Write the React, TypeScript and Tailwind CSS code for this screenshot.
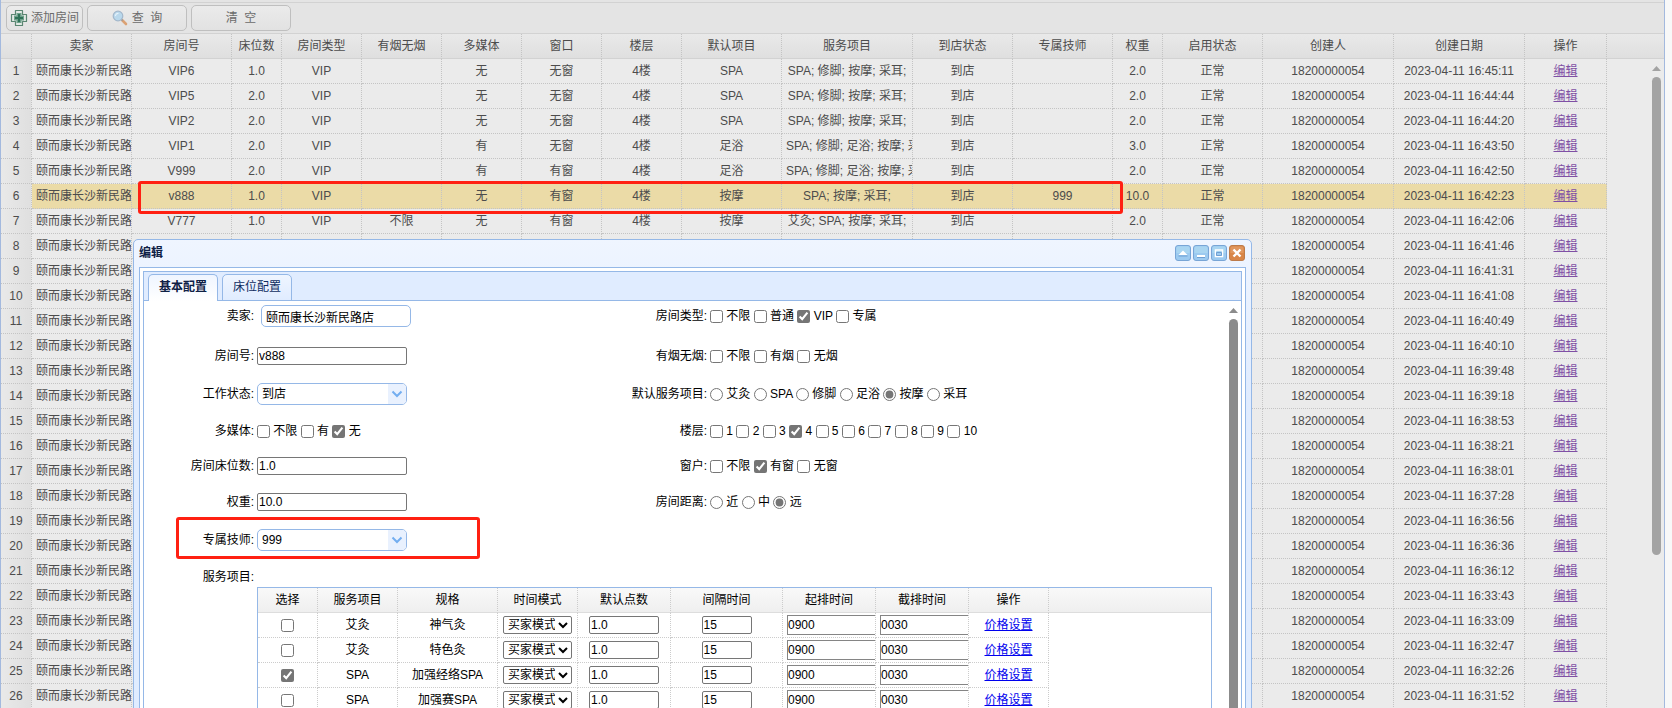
import { Fragment, ReactNode } from "react";

// [room, beds, type, smoking, media, window, floor, default item, items, status, technician, weight, enabled]
const rooms: string[][] = [
  ["VIP6", "1.0", "VIP", "", "无", "无窗", "4楼", "SPA", "SPA; 修脚; 按摩; 采耳;", "到店", "", "2.0", "正常"],
  ["VIP5", "2.0", "VIP", "", "无", "无窗", "4楼", "SPA", "SPA; 修脚; 按摩; 采耳;", "到店", "", "2.0", "正常"],
  ["VIP2", "2.0", "VIP", "", "无", "无窗", "4楼", "SPA", "SPA; 修脚; 按摩; 采耳;", "到店", "", "2.0", "正常"],
  ["VIP1", "2.0", "VIP", "", "有", "无窗", "4楼", "足浴", "SPA; 修脚; 足浴; 按摩; 采耳;", "到店", "", "3.0", "正常"],
  ["V999", "2.0", "VIP", "", "有", "有窗", "4楼", "足浴", "SPA; 修脚; 足浴; 按摩; 采耳;", "到店", "", "2.0", "正常"],
  ["v888", "1.0", "VIP", "", "无", "有窗", "4楼", "按摩", "SPA; 按摩; 采耳;", "到店", "999", "10.0", "正常"],
  ["V777", "1.0", "VIP", "不限", "无", "有窗", "4楼", "按摩", "艾灸; SPA; 按摩; 采耳;", "到店", "", "2.0", "正常"],
];

const times = [
  "16:45:11", "16:44:44", "16:44:20", "16:43:50", "16:42:50", "16:42:23", "16:42:06",
  "16:41:46", "16:41:31", "16:41:08", "16:40:49", "16:40:10", "16:39:48", "16:39:18",
  "16:38:53", "16:38:21", "16:38:01", "16:37:28", "16:36:56", "16:36:36", "16:36:12",
  "16:33:43", "16:33:09", "16:32:47", "16:32:26", "16:31:52",
];

const columns: [string, string][] = [
  ["", "w-[31px]"],
  ["卖家", "w-[100px]"],
  ["房间号", "w-[100px]"],
  ["床位数", "w-[50px]"],
  ["房间类型", "w-[80px]"],
  ["有烟无烟", "w-[80px]"],
  ["多媒体", "w-[80px]"],
  ["窗口", "w-[80px]"],
  ["楼层", "w-[80px]"],
  ["默认项目", "w-[100px]"],
  ["服务项目", "w-[131px]"],
  ["到店状态", "w-[100px]"],
  ["专属技师", "w-[100px]"],
  ["权重", "w-[50px]"],
  ["启用状态", "w-[100px]"],
  ["创建人", "w-[131px]"],
  ["创建日期", "w-[131px]"],
  ["操作", "w-[82px]"],
];

const serviceColumns: [string, string][] = [
  ["选择", "w-[60px]"],
  ["服务项目", "w-[80px]"],
  ["规格", "w-[100px]"],
  ["时间模式", "w-[80px]"],
  ["默认点数", "w-[93px]"],
  ["间隔时间", "w-[112px]"],
  ["起排时间", "w-[93px]"],
  ["截排时间", "w-[93px]"],
  ["操作", "w-[80px]"],
];

const services = [
  { item: "艾灸", spec: "神气灸", on: false },
  { item: "艾灸", spec: "特色灸", on: false },
  { item: "SPA", spec: "加强经络SPA", on: true },
  { item: "SPA", spec: "加强赛SPA", on: false },
];

const textBox = "h-[18px] rounded-[2px] border border-[#767676] bg-white px-px pb-px";

function AddIcon() {
  return (
    <svg width="18" height="18" viewBox="0 0 18 18" fill="none">
      <path d="M5.5 1.5h7v4h4v7h-4v4h-7v-4h-4v-7h4z" fill="#e3e9e5" stroke="#5b8672" strokeWidth="1.2" strokeLinejoin="round" />
      <path d="M6.500 4h5v2.500H14v5h-2.500V14h-5v-2.500H4v-5h2.500z" fill="#6da08a" />
      <path d="M8 5h2v3h3v2h-3v3H8v-3H5V8h3z" fill="#2f7257" />
    </svg>
  );
}

function SearchIcon() {
  return (
    <svg width="16" height="16" viewBox="0 0 16 16" fill="none">
      <path d="M10.500 10.500l3.500 3.500" stroke="#dba274" strokeWidth="2.600" strokeLinecap="round" />
      <path d="M9 9l1.600 1.600" stroke="#9a9a9a" strokeWidth="1.600" />
      <circle cx="6" cy="6" r="4.800" fill="#b9d8ec" stroke="#a3b7cb" strokeWidth="1.200" />
      <path d="M3.400 5.600c.3-1.400 1.300-2.200 2.600-2.300" stroke="#e6f2fa" strokeWidth="1.200" strokeLinecap="round" />
    </svg>
  );
}

function ToolButton({ className, children }: { className: string; children: ReactNode }) {
  return (
    <button
      type="button"
      className={`flex h-[26px] items-center justify-center rounded-[5px] border border-[#bfbfbf] bg-linear-to-b from-[#ebebeb] to-[#e2e2e2] text-[#6b6b6b] ${className}`}
    >
      {children}
    </button>
  );
}

function WindowTool({ name, children, close }: { name: string; children: ReactNode; close?: boolean }) {
  return (
    <button type="button" aria-label={name} className="size-4">
      <svg width="16" height="16" viewBox="0 0 16 16" fill="none">
        <rect x=".5" y=".5" width="15" height="15" rx="2.500" fill={close ? "#d98648" : "#9ccaf0"} stroke={close ? "#bd7b4a" : "#78a5d6"} />
        <path d="M1.500 8V3q0-1.500 1.500-1.500h10q1.500 0 1.500 1.500v5z" fill={close ? "#e0975f" : "#a9d5f1"} />
        {children}
      </svg>
    </button>
  );
}

function Scrollbar({ tone, thumb }: { tone: string; thumb: string }) {
  return (
    <div className={`flex w-[17px] flex-col items-center gap-[6px] pt-[6px] ${tone}`}>
      <svg width="9" height="5" viewBox="0 0 9 5" className="shrink-0">
        <path d="M4.500 0L9 5H0z" fill="currentColor" />
      </svg>
      <div className={`w-[9px] shrink-0 rounded-full bg-current ${thumb}`} />
    </div>
  );
}

function Options({ type, name, items, checked }: { type: "checkbox" | "radio"; name: string; items: string[]; checked?: string }) {
  return (
    <div role="group" aria-label={name} className="whitespace-nowrap">
      {items.map((item) => (
        <Fragment key={item}>
          <label>
            <input
              type={type}
              name={name}
              defaultChecked={item === checked}
              className="size-[13px] align-middle accent-[#757575]"
            />{" "}
            {item}
          </label>{" "}
        </Fragment>
      ))}
    </div>
  );
}

function Combo({ id, value }: { id: string; value: string }) {
  return (
    <div className="flex h-[22px] w-[150px] overflow-hidden rounded-[5px] border border-[#95b8e7] bg-white">
      <select id={id} defaultValue={value} className="min-w-0 flex-1 appearance-none px-1">
        <option>{value}</option>
      </select>
      <span className="flex w-[18px] items-center justify-center bg-[#e9f1fe]">
        <svg width="12" height="8" viewBox="0 0 12 8" fill="none">
          <path d="M1.500 1.500L6 6l4.500-4.500" stroke="#73aef0" strokeWidth="2" />
        </svg>
      </span>
    </div>
  );
}

function Label({ htmlFor, children }: { htmlFor?: string; children: ReactNode }) {
  return htmlFor ? (
    <label htmlFor={htmlFor} className="pr-[3px] text-right">{children}</label>
  ) : (
    <span className="pr-[3px] text-right">{children}</span>
  );
}

function RoomGrid() {
  const cell = "overflow-hidden border-r border-b border-dotted border-[#c4c4c4] p-0 text-center whitespace-nowrap";
  return (
    <table className="w-full table-fixed border-separate border-spacing-0">
      <thead>
        <tr className="h-[25px]">
          {columns.map(([title, width]) => (
            <th key={title} className={`${width} border-r border-b border-[#d2d2d2] border-r-[#c4c4c4] [border-right-style:dotted] bg-linear-to-b from-[#e9e9e9] to-[#dfdfdf] p-0 font-normal`}>
              {title}
            </th>
          ))}
          <th className="border-b border-[#d2d2d2] bg-linear-to-b from-[#e9e9e9] to-[#dfdfdf] p-0" />
        </tr>
      </thead>
      <tbody>
        {times.map((time, i) => {
          const active = i === 5;
          const room = rooms[i] ?? Array<string>(13).fill("");
          return (
            <tr key={time} className={active ? "h-[25px] bg-[#ebdba7]" : "h-[25px]"}>
              <td className={`${cell} bg-linear-to-r from-[#e9e9e9] to-[#dfdfdf]`}>{i + 1}</td>
              <td className={cell}>
                <div className="overflow-hidden pl-1 text-left">颐而康长沙新民路店</div>
              </td>
              {room.map((text, j) => (
                <td key={j} className={cell}>
                  <div className={j === 8 ? "overflow-hidden px-1" : ""}>{text}</div>
                </td>
              ))}
              <td className={cell}>18200000054</td>
              <td className={cell}>2023-04-11 {time}</td>
              <td className={cell}>
                <a href="#edit" className="text-[#7f50a5] underline">编辑</a>
              </td>
              <td className="bg-[#ebebeb] p-0" />
            </tr>
          );
        })}
      </tbody>
    </table>
  );
}

function ServiceGrid() {
  const cell = "overflow-hidden border-r border-b border-dotted border-[#ccc] p-0 text-center whitespace-nowrap";
  return (
    <div className="mr-[29px] ml-[113px] border border-[#95b8e7]">
      <table className="w-full table-fixed border-separate border-spacing-0">
        <thead>
          <tr className="h-[25px]">
            {serviceColumns.map(([title, width]) => (
              <th key={title} className={`${width} border-r border-b border-[#ddd] border-r-[#ccc] [border-right-style:dotted] bg-linear-to-b from-[#f9f9f9] to-[#efefef] p-0 font-normal`}>
                {title}
              </th>
            ))}
            <th className="border-b border-[#ddd] bg-linear-to-b from-[#f9f9f9] to-[#efefef] p-0" />
          </tr>
        </thead>
        <tbody>
          {services.map((s) => (
            <tr key={s.spec} className="h-[25px]">
              <td className={cell}>
                <input type="checkbox" aria-label={s.spec} defaultChecked={s.on} className="size-[13px] align-middle accent-[#757575]" />
              </td>
              <td className={cell}>{s.item}</td>
              <td className={cell}>{s.spec}</td>
              <td className={cell}>
                <select aria-label="时间模式" className="mx-auto block h-[18px] w-[69px] rounded-[2px] border border-[#767676] bg-white">
                  <option>买家模式</option>
                </select>
              </td>
              <td className={cell}>
                <input aria-label="默认点数" defaultValue="1.0" className={`${textBox} mx-auto block w-[70px]`} />
              </td>
              <td className={cell}>
                <input aria-label="间隔时间" defaultValue="15" className={`${textBox} mx-auto block w-[50px]`} />
              </td>
              <td className={cell}>
                <input aria-label="起排时间" defaultValue="0900" className="ml-1 block h-5 w-[100px] border border-[#858585] bg-white" />
              </td>
              <td className={cell}>
                <input aria-label="截排时间" defaultValue="0030" className="ml-1 block h-5 w-[100px] border border-[#858585] bg-white" />
              </td>
              <td className={cell}>
                <a href="#price" className="text-[#0000ee] underline">价格设置</a>
              </td>
              <td className="p-0" />
            </tr>
          ))}
        </tbody>
      </table>
    </div>
  );
}

function EditForm() {
  const row = "grid grid-cols-[113px_340px_113px_1fr] items-center";
  return (
    <form className="min-w-0 flex-1">
      <div className={`${row} h-9 pb-[6px]`}>
        <Label htmlFor="seller">卖家:</Label>
        <input id="seller" defaultValue="颐而康长沙新民路店" className="ml-1 h-[22px] w-[150px] rounded-[5px] border border-[#95b8e7] px-1" />
        <Label>房间类型:</Label>
        <Options type="checkbox" name="房间类型" items={["不限", "普通", "VIP", "专属"]} checked="VIP" />
      </div>
      <div className={`${row} h-[38px]`}>
        <Label htmlFor="room">房间号:</Label>
        <input id="room" defaultValue="v888" className={`${textBox} w-[150px]`} />
        <Label>有烟无烟:</Label>
        <Options type="checkbox" name="有烟无烟" items={["不限", "有烟", "无烟"]} />
      </div>
      <div className={`${row} h-[38px]`}>
        <Label htmlFor="status">工作状态:</Label>
        <Combo id="status" value="到店" />
        <Label>默认服务项目:</Label>
        <Options type="radio" name="默认服务项目" items={["艾灸", "SPA", "修脚", "足浴", "按摩", "采耳"]} checked="按摩" />
      </div>
      <div className={`${row} h-9`}>
        <Label>多媒体:</Label>
        <Options type="checkbox" name="多媒体" items={["不限", "有", "无"]} checked="无" />
        <Label>楼层:</Label>
        <Options type="checkbox" name="楼层" items={["1", "2", "3", "4", "5", "6", "7", "8", "9", "10"]} checked="4" />
      </div>
      <div className={`${row} h-[34px]`}>
        <Label htmlFor="beds">房间床位数:</Label>
        <input id="beds" defaultValue="1.0" className={`${textBox} w-[150px]`} />
        <Label>窗户:</Label>
        <Options type="checkbox" name="窗户" items={["不限", "有窗", "无窗"]} checked="有窗" />
      </div>
      <div className={`${row} h-[38px]`}>
        <Label htmlFor="weight">权重:</Label>
        <input id="weight" defaultValue="10.0" className={`${textBox} w-[150px]`} />
        <Label>房间距离:</Label>
        <Options type="radio" name="房间距离" items={["近", "中", "远"]} checked="远" />
      </div>
      <div className={`${row} relative h-[38px]`}>
        <Label htmlFor="technician">专属技师:</Label>
        <Combo id="technician" value="999" />
        {/* highlight frame around the technician field */}
        <div className="pointer-events-none absolute -top-1 left-8 h-[42px] w-[304px] rounded-[3px] border-3 border-[#ff2012]" />
      </div>
      <div className={`${row} h-7 pt-2`}>
        <Label>服务项目:</Label>
      </div>
      <ServiceGrid />
    </form>
  );
}

function EditDialog() {
  return (
    <section
      role="dialog"
      aria-label="编辑"
      className="absolute top-[239px] left-[133px] w-[1119px] rounded-t-[5px] border border-[#95b8e7] bg-[#e0ecff] bg-linear-to-b from-[#eff5ff] to-[#e0ecff] to-[160px] px-[5px] text-black"
    >
      <header className="flex h-[27px] items-center justify-between pr-px pb-[2px]">
        <h2 className="font-bold text-[#0e2045]">编辑</h2>
        <div className="flex gap-[2px]">
          <WindowTool name="折叠">
            <path d="M8 5.500l4.500 4.500h-9z" fill="#fff" />
            <path d="M3.500 11h9" stroke="#6f9fd3" />
          </WindowTool>
          <WindowTool name="最小化">
            <path d="M4 11h8" stroke="#fff" strokeWidth="2" />
            <path d="M4 12.500h8" stroke="#6f9fd3" />
          </WindowTool>
          <WindowTool name="最大化">
            <path d="M4.500 5h7v6.500h-7z" stroke="#fff" strokeWidth="1.500" />
            <path d="M5.500 7.500h5v3h-5z" stroke="#6f9fd3" />
          </WindowTool>
          <WindowTool name="关闭" close>
            <path d="M4.500 4.500l7 7M11.500 4.500l-7 7" stroke="#fff" strokeWidth="2.400" />
          </WindowTool>
        </div>
      </header>
      <div className="border border-[#95b8e7] bg-white p-[3px]">
        <div className="border border-[#95b8e7]">
          <div className="flex h-[29px] items-end gap-1 border-b border-[#95b8e7] bg-[#e0ecff] pl-1">
            <button type="button" className="-mb-px h-[27px] w-[70px] rounded-t-[5px] border border-b-0 border-[#95b8e7] bg-linear-to-b from-[#eff5ff] to-white pb-[2px] font-bold text-[#0e2045]">
              基本配置
            </button>
            <button type="button" className="-mb-px h-[27px] w-[70px] rounded-t-[5px] border border-[#95b8e7] bg-linear-to-b from-[#eff5ff] to-[#e0ecff] pb-px text-[#0e2d5f]">
              床位配置
            </button>
          </div>
          <div className="flex">
            <EditForm />
            <div className="absolute top-[62px] right-[9px] bottom-0 flex overflow-hidden">
              <Scrollbar tone="text-[#8b8b8b]" thumb="h-[600px]" />
            </div>
          </div>
        </div>
      </div>
    </section>
  );
}

export default function App() {
  return (
    <main className="relative h-screen overflow-hidden bg-[#f8f8f8] pr-[7px] font-['Liberation_Sans','Noto_Sans_CJK_SC',sans-serif] text-[12px] leading-4 text-[#4c4c4c]">
      <div className="h-full overflow-hidden border-x border-[#a3b9de] bg-[#ebebeb]">
        <div className="h-[3px] border-b border-[#d2d2d2] bg-[#e4e4e4]" />
        <div className="flex h-[31px] items-center gap-1 border-b border-[#d2d2d2] bg-[#e4e4e4] pl-[5px]">
          <ToolButton className="w-[77px] gap-[3px]">
            <AddIcon />
            添加房间
          </ToolButton>
          <ToolButton className="w-[100px] gap-1">
            <SearchIcon />
            <span>查&nbsp; 询</span>
          </ToolButton>
          <ToolButton className="w-[100px]">清&nbsp; 空</ToolButton>
        </div>
        <RoomGrid />
      </div>
      <div className="absolute top-[60px] right-[7px]">
        <Scrollbar tone="text-[#a3a3a3]" thumb="h-[478px]" />
      </div>
      {/* highlight frame around the row being edited */}
      <div className="pointer-events-none absolute top-[181px] left-[138px] h-[33px] w-[985px] rounded-[3px] border-3 border-[#ff2012]" />
      <EditDialog />
    </main>
  );
}
